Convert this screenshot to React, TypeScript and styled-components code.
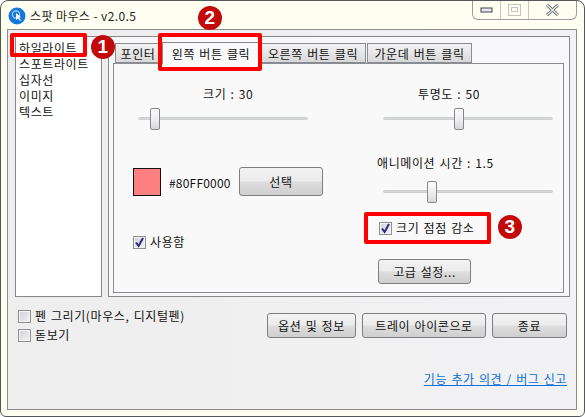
import React from "react";
import styled, { createGlobalStyle } from "styled-components";

const GlobalStyle = createGlobalStyle`
  html, body {
    margin: 0;
    padding: 0;
    background: #fff;
  }
  body {
    font-family: "Noto Sans CJK KR", "Noto Sans", sans-serif;
    font-size: 12px;
    letter-spacing: 0.6px;
    word-spacing: 1px;
    color: #111;
  }
`;

const Window = styled.div`
  position: relative;
  box-sizing: border-box;
  width: 585px;
  height: 417px;
  display: flex;
  flex-direction: column;
  background: #fffff1;
  border: 1px solid #55585a;
  border-radius: 8px 8px 6px 6px;
  overflow: hidden;
`;

const TitleBar = styled.div`
  height: 28px;
  flex: none;
  display: flex;
  align-items: flex-start;
  justify-content: space-between;
`;

const TitleLeft = styled.div`
  display: flex;
  align-items: center;
  gap: 4px;
  padding: 6px 0 0 7px;
`;

const TitleText = styled.span`
  font-size: 12px;
  line-height: 16px;
  letter-spacing: 0.4px;
  word-spacing: 0;
  color: #222;
`;

const Controls = styled.div`
  display: flex;
  height: 19px;
  margin-right: 7px;
  box-sizing: border-box;
  border: 1px solid #9a9c9e;
  border-top: none;
  border-radius: 0 0 6px 6px;
`;

const ControlButton = styled.div<{ $w: number; $line?: boolean }>`
  width: ${({ $w }) => $w}px;
  display: flex;
  align-items: center;
  justify-content: center;
  border-right: ${({ $line }) => ($line ? "1px solid #c4c5c6" : "none")};
`;

const Content = styled.div`
  flex: 1;
  margin: 0 7px 6px 6px;
  box-sizing: border-box;
  background: linear-gradient(90deg, #eeeeee, #f2f2f4);
  border: 1px solid #8a8c8e;
  padding: 6px 6px 0 7px;
  display: flex;
  flex-direction: column;
`;

const TopRow = styled.div`
  display: flex;
  gap: 6px;
  height: 261px;
`;

const ListBox = styled.div`
  width: 87px;
  flex: none;
  box-sizing: border-box;
  background: #fff;
  border: 1px solid #85878a;
  padding: 3px 0 0 3px;
`;

const ListItem = styled.div`
  height: 16px;
  line-height: 16px;
  font-size: 12px;
`;

const TabGroup = styled.div`
  flex: 1;
  min-width: 0;
  box-sizing: border-box;
  border: 1px solid #85878a;
  background: #f8f8fb;
  padding: 6px 5px 3px 4px;
  display: flex;
  flex-direction: column;
  position: relative;
`;

const TabStrip = styled.div`
  display: flex;
  height: 20px;
  padding-left: 2px;
  align-items: flex-end;
`;

const Tab = styled.div<{ $w: number; $active?: boolean }>`
  width: ${({ $w }) => $w}px;
  height: ${({ $active }) => ($active ? 22 : 20)}px;
  box-sizing: border-box;
  margin-right: ${({ $active }) => ($active ? 0 : 1)}px;
  margin-bottom: ${({ $active }) => ($active ? -1 : 0)}px;
  position: relative;
  z-index: ${({ $active }) => ($active ? 2 : 0)};
  border: 1px solid #898c90;
  border-bottom: ${({ $active }) => ($active ? "none" : "1px solid #898c90")};
  background: ${({ $active }) =>
    $active ? "#f9f9f9" : "linear-gradient(#f3f3f3, #e6e6e6 50%, #d8d8d8)"};
  font-size: 12px;
  line-height: ${({ $active }) => ($active ? 22 : 20)}px;
  text-align: center;
  white-space: nowrap;
`;

const TabPanel = styled.div`
  flex: 1;
  box-sizing: border-box;
  border: 1px solid #898c90;
  background: #f9f9f9;
  display: grid;
  grid-template-columns: 250px 1fr;
`;

const Column = styled.div<{ $left: number }>`
  padding-left: ${({ $left }) => $left}px;
  display: flex;
  flex-direction: column;
  align-items: flex-start;
`;

const SliderLabel = styled.div<{ $top: number; $indent: number }>`
  margin-top: ${({ $top }) => $top}px;
  margin-left: ${({ $indent }) => $indent}px;
  height: 16px;
  line-height: 16px;
  font-size: 12px;
  white-space: nowrap;
`;

const Slider = styled.div<{ $top: number; $indent: number }>`
  position: relative;
  width: 170px;
  height: 22px;
  margin-top: ${({ $top }) => $top}px;
  margin-left: ${({ $indent }) => $indent}px;
`;

const Track = styled.div`
  position: absolute;
  left: 0;
  right: 0;
  top: 9px;
  height: 3px;
  box-sizing: border-box;
  border-radius: 2px;
  background: #d6d8d8;
  border: 1px solid #cdd0d0;
`;

const Thumb = styled.div<{ $x: number }>`
  position: absolute;
  left: ${({ $x }) => $x}px;
  top: 0;
  width: 10px;
  height: 22px;
  box-sizing: border-box;
  border: 1px solid #84888c;
  border-radius: 2px;
  background: linear-gradient(#fbfbfb, #f0f0f0 50%, #d8d8d8);
`;

const ColorRow = styled.div`
  margin-top: 37px;
  display: flex;
  align-items: center;
`;

const Swatch = styled.div`
  width: 28px;
  height: 28px;
  box-sizing: border-box;
  background: #ff8080;
  border: 1px solid #111;
`;

const ColorCode = styled.span`
  margin-left: 8px;
  width: 70px;
  font-size: 12px;
  line-height: 16px;
  margin-top: 2px;
  letter-spacing: 0.2px;
`;

const Button = styled.div<{ $w: number; $h: number; $top?: number; $left?: number }>`
  width: ${({ $w }) => $w}px;
  height: ${({ $h }) => $h}px;
  margin-top: ${({ $top }) => $top ?? 0}px;
  margin-left: ${({ $left }) => $left ?? 0}px;
  box-sizing: border-box;
  flex: none;
  display: flex;
  align-items: center;
  justify-content: center;
  border: 1px solid #7d7f82;
  border-radius: 3px;
  background: linear-gradient(#f3f3f3, #ebebeb 48%, #dddddd 52%, #cfcfcf);
  font-size: 12px;
  white-space: nowrap;
`;

const CheckRow = styled.div<{ $top: number; $left?: number }>`
  display: flex;
  align-items: center;
  gap: 4px;
  height: 16px;
  margin-top: ${({ $top }) => $top}px;
  margin-left: ${({ $left }) => $left ?? 0}px;
  font-size: 12px;
  line-height: 16px;
  white-space: nowrap;
`;

const CheckBox = styled.div`
  width: 13px;
  height: 13px;
  box-sizing: border-box;
  flex: none;
  border: 1px solid #8e8f8f;
  background: linear-gradient(135deg, #cfd0d4, #f4f4f6);
  box-shadow: inset 0 0 0 1px #f4f4f4;
  display: flex;
  align-items: center;
  justify-content: center;
`;

const BottomRow = styled.div`
  display: flex;
  justify-content: space-between;
  padding: 11px 3px 0 3px;
`;

const Options = styled.div`
  display: flex;
  flex-direction: column;
`;

const Actions = styled.div`
  display: flex;
  gap: 6px;
  margin-top: 5px;
`;

const LinkRow = styled.div`
  text-align: right;
  padding-right: 3px;
  margin-top: 27px;
`;

const FeedbackLink = styled.a`
  color: #0a6fd8;
  text-decoration: underline;
  font-size: 12px;
  line-height: 16px;
`;

const RedBox = styled.div<{ $x: number; $y: number; $w: number; $h: number }>`
  position: absolute;
  left: ${({ $x }) => $x}px;
  top: ${({ $y }) => $y}px;
  width: ${({ $w }) => $w}px;
  height: ${({ $h }) => $h}px;
  box-sizing: border-box;
  border: 4px solid #ff0000;
  border-radius: 2px;
  z-index: 5;
`;

const Badge = styled.div<{ $x: number; $y: number }>`
  position: absolute;
  left: ${({ $x }) => $x}px;
  top: ${({ $y }) => $y}px;
  width: 24px;
  height: 24px;
  border-radius: 50%;
  background: #c20a0a;
  color: #fff;
  font-family: "Liberation Sans", sans-serif;
  font-weight: 700;
  font-size: 19px;
  line-height: 24px;
  text-align: center;
  z-index: 6;
`;

const Check = () => (
  <svg width="11" height="11" viewBox="0 0 11 11">
    <path d="M2 5.5 L4.6 9 L9 1" fill="none" stroke="#2b2a86" strokeWidth="2" />
  </svg>
);

const AppIcon = () => (
  <svg width="18" height="18" viewBox="0 0 18 18">
    <circle cx="9" cy="9" r="8.5" fill="#1577d8" />
    <circle cx="8" cy="7.5" r="3.6" fill="none" stroke="#a9d4f8" strokeWidth="1.2" />
    <path d="M8 6 L8 13 L10 11.4 L12 14 L13 13.2 L11.2 10.8 L13 10 Z" fill="#eef6ff" />
  </svg>
);

const tabs = [
  { label: "포인터", w: 46 },
  { label: "왼쪽 버튼 클릭", w: 98, active: true },
  { label: "오른쪽 버튼 클릭", w: 106 },
  { label: "가운데 버튼 클릭", w: 105 },
];

const items = ["하일라이트", "스포트라이트", "십자선", "이미지", "텍스트"];

export default function App() {
  return (
    <Window>
      <GlobalStyle />
      <TitleBar>
        <TitleLeft>
          <AppIcon />
          <TitleText>스팟 마우스 - v2.0.5</TitleText>
        </TitleLeft>
        <Controls>
          <ControlButton $w={27} $line>
            <svg width="13" height="6" viewBox="0 0 13 6">
              <rect x="1" y="1" width="11" height="4" fill="#e8e8f0" stroke="#3d4250" />
            </svg>
          </ControlButton>
          <ControlButton $w={27} $line>
            <svg width="13" height="12" viewBox="0 0 13 12">
              <rect x="0.5" y="0.5" width="12" height="11" fill="none" stroke="#c2c4c8" />
              <rect x="3.5" y="3.5" width="6" height="4" fill="none" stroke="#c2c4c8" />
            </svg>
          </ControlButton>
          <ControlButton $w={47}>
            <svg width="13" height="12" viewBox="0 0 13 12">
              <path d="M1 1 L12 11 M12 1 L1 11" stroke="#5a6068" strokeWidth="3" />
              <path d="M1 1 L12 11 M12 1 L1 11" stroke="#f2f3f6" strokeWidth="1.2" />
            </svg>
          </ControlButton>
        </Controls>
      </TitleBar>

      <Content>
        <TopRow>
          <ListBox>
            {items.map((item) => (
              <ListItem key={item}>{item}</ListItem>
            ))}
          </ListBox>
          <TabGroup>
            <TabStrip>
              {tabs.map((tab) => (
                <Tab key={tab.label} $w={tab.w} $active={tab.active}>
                  {tab.label}
                </Tab>
              ))}
            </TabStrip>
            <TabPanel>
              <Column $left={19}>
                <SliderLabel $top={22} $indent={70}>크기 :  30</SliderLabel>
                <Slider $top={6} $indent={5}>
                  <Track />
                  <Thumb $x={12} />
                </Slider>
                <ColorRow>
                  <Swatch />
                  <ColorCode>#80FF0000</ColorCode>
                  <Button $w={84} $h={29}>선택</Button>
                </ColorRow>
                <CheckRow $top={38}>
                  <CheckBox><Check /></CheckBox>
                  사용함
                </CheckRow>
              </Column>
              <Column $left={0}>
                <SliderLabel $top={22} $indent={54}>투명도 : 50</SliderLabel>
                <Slider $top={6} $indent={19}>
                  <Track />
                  <Thumb $x={71} />
                </Slider>
                <SliderLabel $top={25} $indent={13}>애니메이션 시간 : 1.5</SliderLabel>
                <Slider $top={10} $indent={19}>
                  <Track />
                  <Thumb $x={44} />
                </Slider>
                <CheckRow $top={17} $left={15}>
                  <CheckBox><Check /></CheckBox>
                  크기 점점 감소
                </CheckRow>
                <Button $w={93} $h={25} $top={23} $left={14}>고급 설정...</Button>
              </Column>
            </TabPanel>
          </TabGroup>
        </TopRow>

        <BottomRow>
          <Options>
            <CheckRow $top={0}>
              <CheckBox />
              펜 그리기(마우스, 디지털펜)
            </CheckRow>
            <CheckRow $top={3}>
              <CheckBox />
              돋보기
            </CheckRow>
          </Options>
          <Actions>
            <Button $w={89} $h={25}>옵션 및 정보</Button>
            <Button $w={124} $h={25}>트레이 아이콘으로</Button>
            <Button $w={75} $h={25}>종료</Button>
          </Actions>
        </BottomRow>
        <LinkRow>
          <FeedbackLink href="#">기능 추가 의견 / 버그 신고</FeedbackLink>
        </LinkRow>
      </Content>

      <RedBox $x={9} $y={32} $w={77} $h={24} />
      <RedBox $x={157} $y={32} $w={104} $h={38} />
      <RedBox $x={363} $y={211} $w={127} $h={32} />
      <Badge $x={90} $y={34}>1</Badge>
      <Badge $x={197} $y={5}>2</Badge>
      <Badge $x={497} $y={214}>3</Badge>
    </Window>
  );
}
